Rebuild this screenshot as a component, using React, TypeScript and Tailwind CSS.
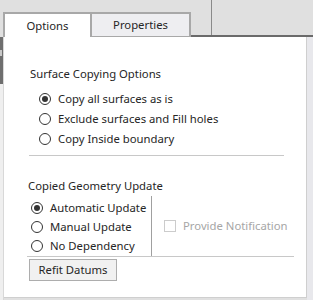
import React from "react";

function Radio({ checked }: { checked?: boolean }) {
  return (
    <span className="w-[12px] h-[12px] rounded-full border border-[#333333] bg-white flex items-center justify-center shrink-0">
      {checked && <span className="w-[6px] h-[6px] rounded-full bg-[#333333]" />}
    </span>
  );
}

export default function App() {
  return (
    <div className="w-[313px] h-[300px] bg-[#e0e0e0] flex flex-col overflow-hidden font-['Noto_Sans',sans-serif] text-[11.3px] text-[#262626] whitespace-nowrap">
      {/* tab row */}
      <div className="h-[37px] flex items-end shrink-0">
        <div className="w-[3px] h-[37px]" />
        <div className="w-[89px] h-[25px] bg-white border-l-2 border-t-2 border-r-2 border-[#a8a8a8] flex items-center justify-center leading-[16px]">
          Options
        </div>
        <div className="w-[99px] h-[25px] bg-[#eeeef1] border-t-2 border-r-2 border-b border-[#a8a8a8] flex items-center justify-center leading-[16px]">
          Properties
        </div>
        <div className="flex-1 h-[37px] flex border-b-2 border-[#6a6a6a]">
          <div className="w-[20px]" />
          <div className="w-[1px] bg-[#8a8a8a]" />
        </div>
      </div>
      {/* body */}
      <div className="flex flex-1 min-h-0">
        <div className="w-[4px] flex flex-col bg-[#efefef] border-r border-[#d8d8d8]">
          <div className="h-[47px] bg-[#6e6e6e] flex flex-col pt-[13px]">
            <div className="w-[2px] h-[6px] bg-[#c8c8c8]" />
          </div>
        </div>
        <div className="w-[303px] h-[261px] bg-white border-r border-b border-[#cfcfcf] flex flex-col items-start">
          <div className="mt-[29px] ml-[26px] leading-[16px]">Surface Copying Options</div>
          <div className="mt-[7px] ml-[35px] flex flex-col">
            {[
              ["Copy all surfaces as is", true],
              ["Exclude surfaces and Fill holes", false],
              ["Copy Inside boundary", false],
            ].map(([label, c]) => (
              <div key={label as string} className="h-[20px] flex items-center gap-[7px] leading-[16px]">
                <Radio checked={c as boolean} />
                <span>{label as string}</span>
              </div>
            ))}
          </div>
          <div className="mt-[6px] ml-[25px] w-[255px] h-[1px] bg-[#c8c8c8]" />
          <div className="mt-[22px] ml-[24px] leading-[16px]">Copied Geometry Update</div>
          <div className="mt-[2px] ml-[23px] w-[267px] flex border-b border-[#c8c8c8]">
            <div className="w-[125px] border-r border-[#a0a0a0] pt-[2px] pb-[1px] pl-[4px] flex flex-col">
              {[
                ["Automatic Update", true],
                ["Manual Update", false],
                ["No Dependency", false],
              ].map(([label, c]) => (
                <div key={label as string} className="h-[19px] flex items-center gap-[7px] leading-[16px]">
                  <Radio checked={c as boolean} />
                  <span>{label as string}</span>
                </div>
              ))}
            </div>
            <div className="flex-1 pl-[12px] flex items-center gap-[7px]">
              <span className="w-[12px] h-[12px] border border-[#cccccc] bg-white shrink-0" />
              <span className="text-[#a6a6a6] leading-[16px]">Provide Notification</span>
            </div>
          </div>
          <button className="mt-[2px] ml-[25px] w-[88px] h-[22px] bg-[#f1f1f1] border border-[#adadad] flex items-center justify-center leading-[16px] text-[#262626]">
            Refit Datums
          </button>
        </div>
        <div className="flex-1 bg-[#e8e8ec]" />
      </div>
    </div>
  );
}
